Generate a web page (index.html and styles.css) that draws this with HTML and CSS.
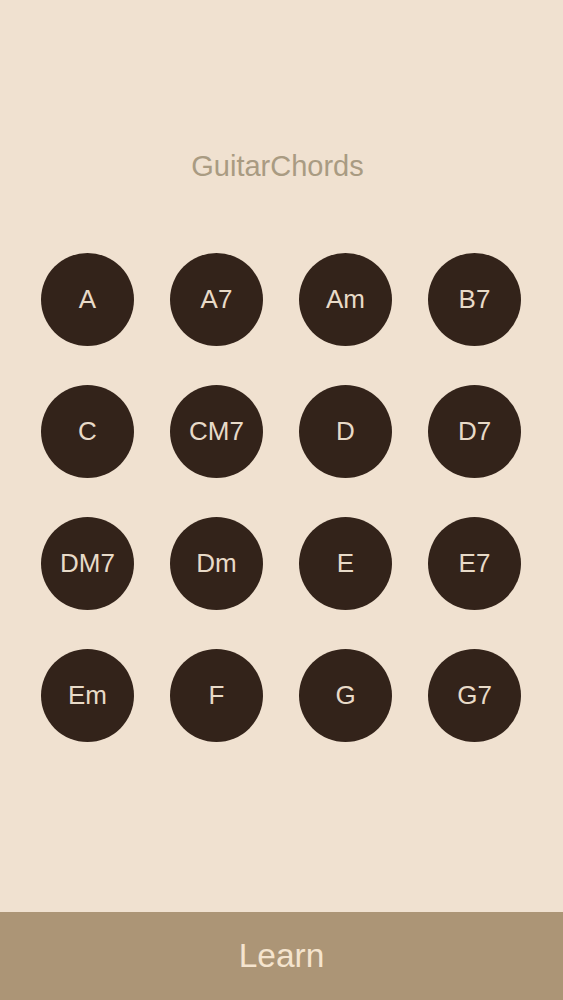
FILE: index.html
```html
<!DOCTYPE html>
<html lang="en">
<head>
<meta charset="utf-8">
<title>GuitarChords</title>
<link rel="stylesheet" href="styles.css">
</head>
<body>
<div class="app">
  <main class="main">
    <h1 class="title">GuitarChords</h1>
    <div class="grid">
      <button class="chord">A</button>
      <button class="chord">A7</button>
      <button class="chord">Am</button>
      <button class="chord">B7</button>
      <button class="chord">C</button>
      <button class="chord">CM7</button>
      <button class="chord">D</button>
      <button class="chord">D7</button>
      <button class="chord">DM7</button>
      <button class="chord">Dm</button>
      <button class="chord">E</button>
      <button class="chord">E7</button>
      <button class="chord">Em</button>
      <button class="chord">F</button>
      <button class="chord">G</button>
      <button class="chord">G7</button>
    </div>
  </main>
  <footer class="learn-bar">
    <span class="learn">Learn</span>
  </footer>
</div>
</body>
</html>
```

FILE: styles.css
```css
html, body {
  margin: 0;
  padding: 0;
  background: #f0e1d0;
  font-family: "Liberation Sans", Arial, sans-serif;
}

.app {
  min-height: 100vh;
  display: flex;
  flex-direction: column;
}

.main {
  padding-top: 149px;
  display: flex;
  flex-direction: column;
  align-items: center;
}

.title {
  margin: 0 8px 0 0;
  font-size: 29px;
  line-height: 34px;
  font-weight: 400;
  color: #a99b82;
}

.grid {
  margin-top: 70px;
  margin-right: 1px;
  display: grid;
  grid-template-columns: repeat(4, 93px);
  column-gap: 36px;
  row-gap: 39px;
  justify-content: center;
}

.chord {
  width: 93px;
  height: 93px;
  border: none;
  border-radius: 50%;
  padding: 0;
  background: #33231a;
  color: #e8dac8;
  font-family: "Liberation Sans", Arial, sans-serif;
  font-size: 26px;
  display: flex;
  align-items: center;
  justify-content: center;
}

.learn-bar {
  margin-top: auto;
  height: 88px;
  background: #ac9576;
  display: flex;
  align-items: center;
  justify-content: center;
}

.learn {
  font-size: 33.5px;
  color: #f5e4ce;
}
```
